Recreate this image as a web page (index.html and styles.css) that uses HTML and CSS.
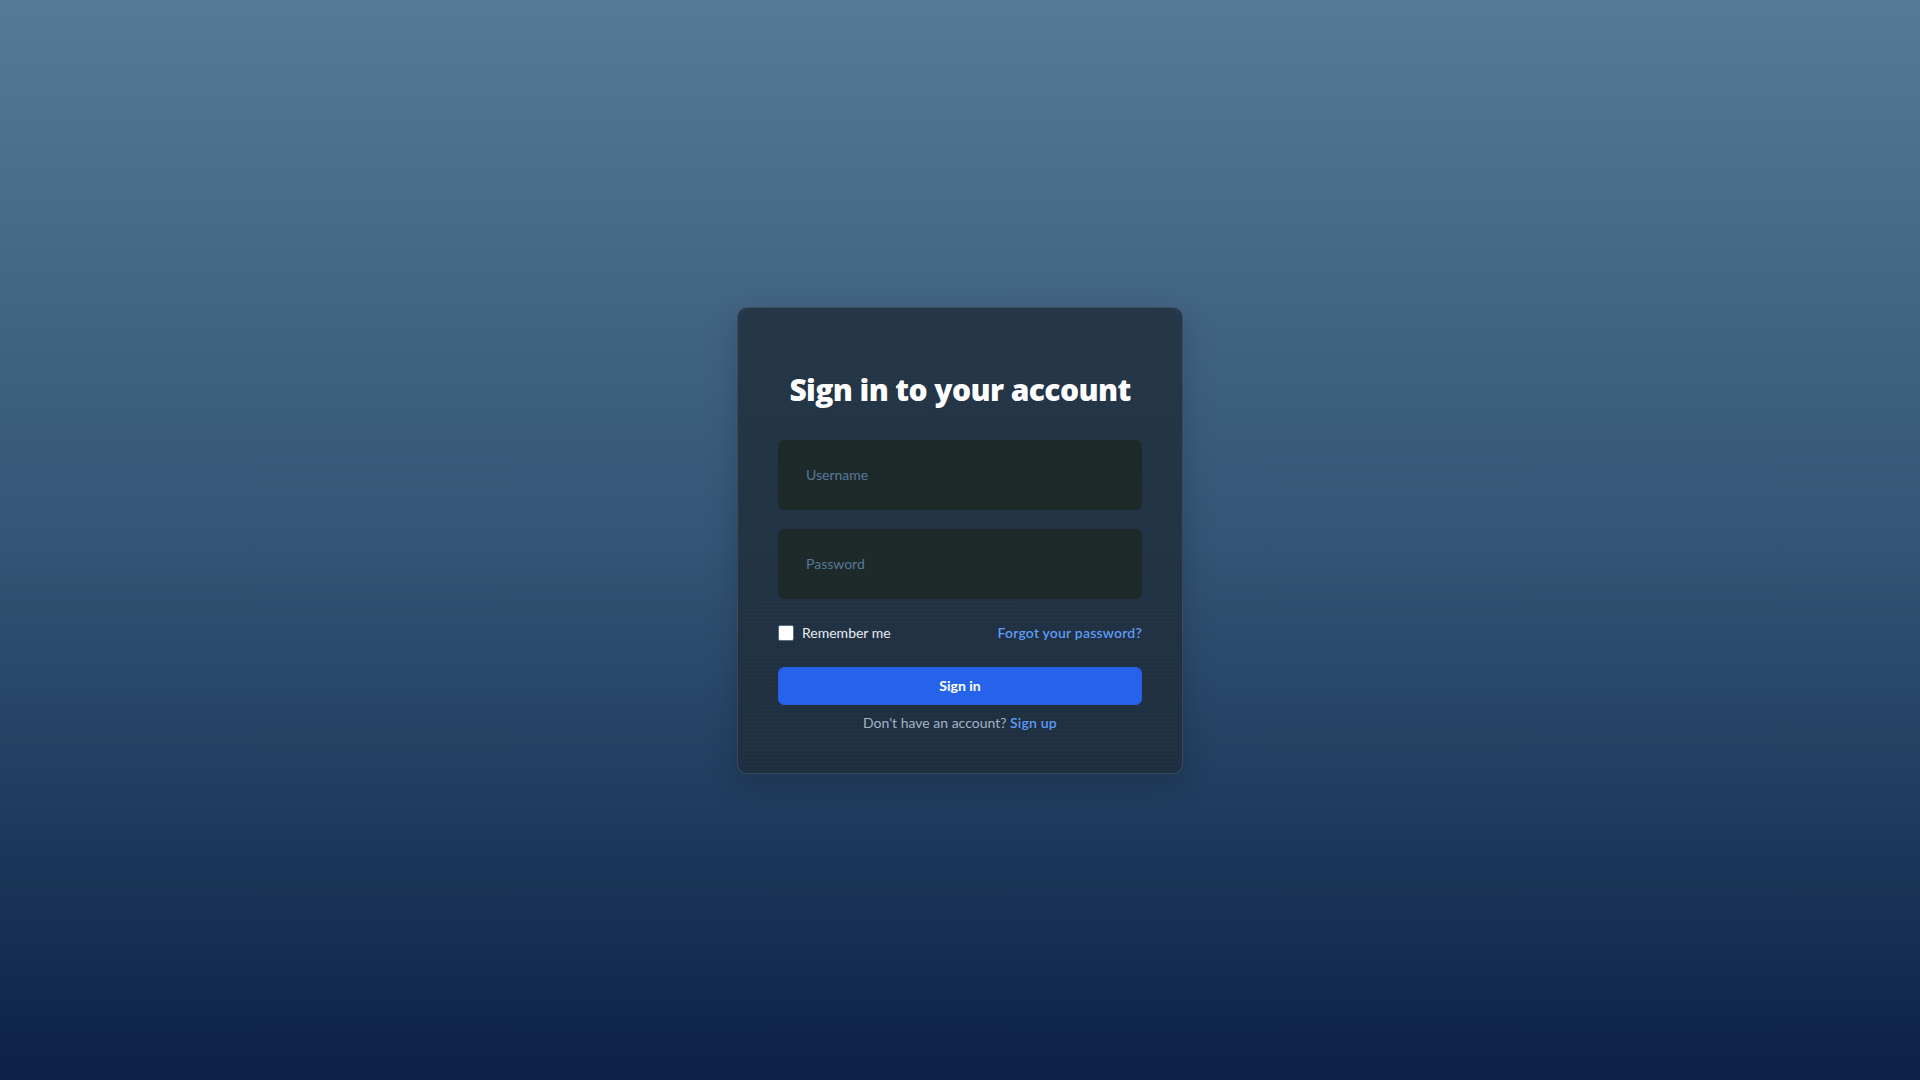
FILE: index.html
```html
<!DOCTYPE html>
<html lang="en">
<head>
<meta charset="utf-8">
<title>Sign in</title>
<link rel="stylesheet" href="styles.css">
</head>
<body>
<main class="page">
  <form class="card">
    <h1 class="title">Sign in to your account</h1>
    <div class="fields">
      <input class="field" type="text" placeholder="Username">
      <input class="field" type="password" placeholder="Password">
    </div>
    <div class="row">
      <label class="remember"><span class="box"></span><span>Remember me</span></label>
      <a class="link" href="#">Forgot your password?</a>
    </div>
    <button class="btn" type="button">Sign in</button>
    <p class="signup">Don't have an account? <a class="link" href="#">Sign up</a></p>
  </form>
</main>
</body>
</html>
```
FILE: styles.css
```css
* { box-sizing: border-box; }
html, body { margin: 0; height: 100%; }
body {
  font-family: Lato, "Noto Sans", sans-serif;
  background: linear-gradient(180deg, #557996 0%, #345575 50%, #0b2145 100%);
}
.page {
  min-height: 100vh;
  display: flex;
  align-items: center;
  justify-content: center;
}
.card {
  width: 446px;
  padding: 64px 40px 40px;
  border-radius: 10px;
  background-color: rgba(30, 43, 52, 0.8);
  background-image: radial-gradient(rgba(40, 70, 140, 0.18) 1px, transparent 1px);
  background-size: 4px 4px;
  border: 1px solid rgba(120, 150, 190, 0.25);
  box-shadow: 0 10px 30px rgba(0, 0, 0, 0.18);
  display: flex;
  flex-direction: column;
}
.title {
  margin: 0 0 32px;
  text-align: center;
  color: #ffffff;
  font-family: "Open Sans", Lato, sans-serif;
  font-size: 30px;
  line-height: 36px;
  font-weight: 800;
  letter-spacing: -0.6px;
  text-shadow: 0 0 1px #1b2b55;
}
.fields { display: flex; flex-direction: column; gap: 19px; }
.field {
  height: 70px;
  width: 100%;
  border: none;
  border-radius: 6px;
  background: #1e292a;
  padding: 0 24px 0 28px;
  font-family: inherit;
  font-size: 14px;
  color: #d6dde6;
  outline: none;
}
.field::placeholder { color: #58789a; }
.row {
  margin-top: 24px;
  display: flex;
  align-items: center;
  justify-content: space-between;
  height: 20px;
  font-size: 14px;
}
.remember {
  display: flex;
  align-items: center;
  gap: 8px;
  color: #e8edf2;
}
.box {
  width: 16px;
  height: 16px;
  border-radius: 2px;
  background: #ffffff;
  border: 1px solid #5a6f88;
}
.link {
  color: #5d9cf8;
  text-decoration: none;
  font-weight: 600;
  letter-spacing: 0.2px;
}
.btn {
  margin-top: 24px;
  height: 38px;
  width: 100%;
  border: 1px solid #2a5fd8;
  border-radius: 6px;
  background: #2563eb;
  color: #ffffff;
  font-family: inherit;
  font-size: 14px;
  font-weight: 700;
}
.signup {
  margin: 8px 0 0;
  text-align: center;
  font-size: 14px;
  line-height: 20px;
  color: #a3b3c6;
}
```
